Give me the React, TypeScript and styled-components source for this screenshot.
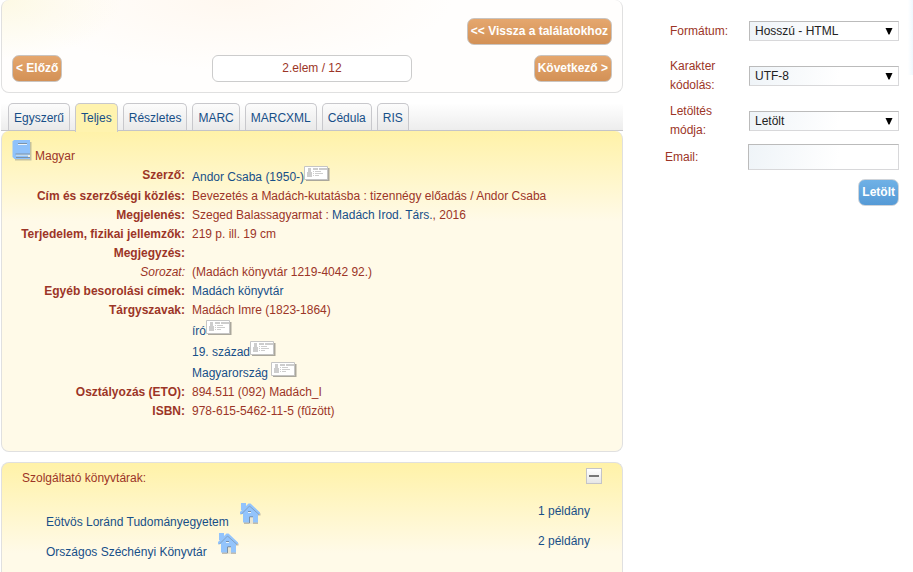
import React from 'react';
import styled, { createGlobalStyle, css } from 'styled-components';

const GlobalStyle = createGlobalStyle`
  * { box-sizing: border-box; }
  body {
    margin: 0;
    background: #fff;
    color: #9c3527;
    font: 12px/19px "Liberation Sans", Arial, sans-serif;
  }
  button, input, select { font: inherit; margin: 0; }
`;

const link = '#174f88';

const Page = styled.div`
  display: grid;
  grid-template-columns: minmax(0, 1fr) 290px;
  align-items: start;
  min-height: 100vh;
  background: linear-gradient(to right, transparent, #eef8fe) top right / 5px 75px no-repeat, #fff;
`;

const Main = styled.main`
  padding-left: 1px;
`;

const Header = styled.section`
  display: flex;
  flex-direction: column;
  gap: 10px;
  padding: 18px 10px 10px;
  border: 1px solid #e0e0e0;
  border-top: 0;
  border-radius: 8px;
  background:
    radial-gradient(ellipse 120px 60px at 0 0, #fdf9e4, transparent),
    radial-gradient(ellipse 220px 70px at 230px 0, #fff8f0, transparent),
    #fffefd;
`;

const BackRow = styled.div`
  display: flex;
  justify-content: flex-end;
`;

const Pager = styled.nav`
  display: grid;
  grid-template-columns: 1fr 200px 1fr;
  > :last-child { justify-self: end; }
  > :first-child { justify-self: start; }
`;

const Button = styled.button<{ $tone: 'orange' | 'blue' }>`
  height: 27px;
  padding: 0 3px;
  border: 1px solid ${p => (p.$tone === 'orange' ? '#c9c4c0' : '#cfd4da')};
  border-radius: 7px;
  background: ${p => (p.$tone === 'orange'
    ? 'linear-gradient(#e5a76e, #d39156)'
    : 'linear-gradient(#6fb1e6, #559ad6)')};
  color: #fff;
  font-weight: bold;
  white-space: nowrap;
  cursor: pointer;
`;

const Position = styled.div`
  height: 27px;
  border: 1px solid #ccc;
  border-radius: 6px;
  background: #fff;
  line-height: 25px;
  text-align: center;
`;

const Tabs = styled.div`
  display: flex;
  gap: 5px;
  margin-top: 10px;
  padding-left: 7px;
  border-bottom: 1px solid #c4c4c8;
  background: linear-gradient(#fff, #ededed);
`;

const Tab = styled.button<{ $active?: boolean }>`
  height: 27px;
  padding: 2px 5px 0;
  border: 1px solid #c8c8cc;
  border-bottom: 0;
  border-radius: 5px 5px 0 0;
  background: linear-gradient(#fcfcfc, #e9e9e9);
  color: ${link};
  cursor: pointer;
  ${p => p.$active && css`
    height: 29px;
    margin-bottom: -2px;
    padding-bottom: 2px;
    background: #fff3ae;
    z-index: 1;
  `}
`;

const Panel = styled.section`
  border: 1px solid #e0e0e0;
  border-radius: 8px;
  background: linear-gradient(#fff2a8, #fffae8 90px);
`;

const Record = styled(Panel)`
  padding: 9px 0 30px;
  border-top: 0;
`;

const Kind = styled.div`
  display: flex;
  align-items: flex-end;
  gap: 3px;
  height: 26px;
  padding-left: 10px;
  > svg { margin-bottom: 5px; }
`;

const Fields = styled.table`
  width: 100%;
  border-collapse: collapse;
  th, td { padding: 0; vertical-align: top; }
  td { padding-left: 7px; }
`;

const Label = styled.th<{ $minor?: boolean }>`
  width: 183px;
  text-align: right;
  font-weight: ${p => (p.$minor ? 'normal' : 'bold')};
  font-style: ${p => (p.$minor ? 'italic' : 'normal')};
`;

const Link = styled.a`
  color: ${link};
  text-decoration: none;
`;

const Authority = styled.div`
  display: flex;
  align-items: flex-start;
  height: 21px;
  > :first-child { padding-top: 2px; white-space: pre; }
`;

const Libraries = styled(Panel)`
  margin-top: 10px;
  padding: 5px 20px 10px;
  border-bottom: 0;
  border-radius: 8px 8px 0 0;
`;

const PanelHead = styled.div`
  display: flex;
  justify-content: space-between;
  height: 34px;
  > span { padding-top: 1px; }
`;

const Toggle = styled.button`
  display: grid;
  place-items: center;
  width: 16px;
  height: 16px;
  padding: 0;
  border: 1px solid #c4c4c8;
  background: linear-gradient(#fff, #e6e6e6);
`;

const LibraryList = styled.ul`
  margin: 0;
  padding: 0 12px 0 24px;
  list-style: none;
`;

const Library = styled.li`
  display: flex;
  justify-content: space-between;
  height: 30px;
`;

const LibraryName = styled.span`
  display: flex;
  align-items: flex-start;
  gap: 10px;
  > :first-child { padding-top: 11px; }
`;

const Export = styled.form`
  display: grid;
  grid-template-columns: 78px 151px;
  grid-template-rows: 40px 50px 40px 32px 33px;
  column-gap: 5px;
  padding: 11px 14px 0 42px;
  align-items: center;
  > :last-child { grid-column: 2; justify-self: end; align-self: end; }
`;

const FormLabel = styled.label<{ $flush?: boolean }>`
  padding-left: ${p => (p.$flush ? 0 : 5)}px;
`;

const field = css`
  width: 100%;
  border: 1px solid #d8d8da;
  border-top: 2px solid #bbb;
  border-left: 2px solid #bbb;
  border-radius: 0;
  background: linear-gradient(100deg, #eff4f8, #fff 60%);
  color: #222;
`;

const SelectBox = styled.div`
  display: grid;
  align-items: center;
  padding-left: 1px;
  > * { grid-area: 1 / 1; }
  > svg { justify-self: end; margin-right: 6px; pointer-events: none; }
`;

const Select = styled.select`
  ${field}
  height: 20px;
  padding: 0 16px 1px 5px;
  border-width: 1px;
  appearance: none;
`;

const Input = styled.input`
  ${field}
  height: 26px;
  border-width: 1px;
`;

const BookIcon = () => (
  <svg width="20" height="21" viewBox="0 0 20 21" aria-hidden="true">
    <path d="M3 2h16.500v18.500H3z" fill="#8b8f88" opacity=".5" />
    <path d="M2 0h16v19H2.500L.5 17V1.500z" fill="#8fc2fb" />
    <path d="M4 14.500h14v3H4z" fill="#eef1ea" />
    <path d="M4 15.500h12v1.500H4z" fill="#8fc2fb" />
    <path d="M3.500 14h14.500M4 17.500h14" stroke="#7d93a8" fill="none" />
    <path d="M6 3.500h9" stroke="#7d93a8" />
    <path d="M6 4.500h9" stroke="#eaf3fb" />
  </svg>
);

const CardIcon = () => (
  <svg width="26" height="16" viewBox="0 0 26 16" aria-hidden="true">
    <path d="M2 2h23.500v13H2z" fill="#aaa79c" />
    <path d="M.5.5h23v13H.5z" fill="#fff" stroke="#c5c5c5" />
    <path d="M4 2h3v4h1v5H3V6h1zM9 2h5v2H9zM15 2h8v2h-8zM9 5h1v1H9zM11 5h6v1h-6zM9 7h1v1H9zM11 7h8v1h-8zM9 9h1v1H9zM11 9h4v1h-4z" fill="#cdcdcd" />
  </svg>
);

const HomeIcon = () => (
  <svg width="23" height="24" viewBox="0 0 23 24" aria-hidden="true">
    <path d="M5 12 12 4l9.500 7.500v2H19V22H5z" fill="#8f8c86" opacity=".55" />
    <path d="M2 1h5v3l2.500-2.500h2L21 10.500V12h-2v8.500h-5V15h-3.500v5.500H4V12H1v-2l2-2H2z" fill="#93c4fc" />
    <path d="M2 12.500 10.500 4 20 12.500" fill="none" stroke="#7f9dbd" strokeWidth=".9" />
    <path d="M10.500 15H14v7h-3.500z" fill="#e9e5d2" />
    <path d="M9 9.500h3M10.500 15v6M10.500 14.800H14" stroke="#7088a3" strokeWidth=".9" fill="none" />
    <path d="M9 10.500h3" stroke="#eaf3fb" />
  </svg>
);

const Arrow = () => (
  <svg width="8" height="7" viewBox="0 0 8 7" aria-hidden="true">
    <path d="M.5 0h7L4.500 6.500h-1z" fill="#000" />
  </svg>
);

const tabs = ['Egyszerű', 'Teljes', 'Részletes', 'MARC', 'MARCXML', 'Cédula', 'RIS'];

const WithCard = ({ children }: { children: string }) => (
  <Authority>
    <Link href="#">{children}</Link>
    <CardIcon />
  </Authority>
);

const fields: { label: string; minor?: boolean; value: React.ReactNode }[] = [
  { label: 'Szerző:', value: <WithCard>Andor Csaba (1950-)</WithCard> },
  { label: 'Cím és szerzőségi közlés:', value: 'Bevezetés a Madách-kutatásba : tizennégy előadás / Andor Csaba' },
  { label: 'Megjelenés:', value: <>Szeged Balassagyarmat : <Link href="#">Madách Irod. Társ.</Link>, 2016</> },
  { label: 'Terjedelem, fizikai jellemzők:', value: '219 p. ill. 19 cm' },
  { label: 'Megjegyzés:', value: '' },
  { label: 'Sorozat:', minor: true, value: '(Madách könyvtár 1219-4042 92.)' },
  { label: 'Egyéb besorolási címek:', value: <Link href="#">Madách könyvtár</Link> },
  {
    label: 'Tárgyszavak:',
    value: (
      <>
        Madách Imre (1823-1864)
        <WithCard>író</WithCard>
        <WithCard>19. század</WithCard>
        <WithCard>{'Magyarország '}</WithCard>
      </>
    ),
  },
  { label: 'Osztályozás (ETO):', value: '894.511 (092) Madách_I' },
  { label: 'ISBN:', value: '978-615-5462-11-5 (fűzött)' },
];

const libraries = [
  { name: 'Eötvös Loránd Tudományegyetem', copies: '1 példány' },
  { name: 'Országos Széchényi Könyvtár', copies: '2 példány' },
];

const selects = [
  { id: 'format', label: 'Formátum:', value: 'Hosszú - HTML' },
  { id: 'charset', label: 'Karakter kódolás:', value: 'UTF-8' },
  { id: 'method', label: 'Letöltés módja:', value: 'Letölt' },
];

export default function App() {
  return (
    <>
      <GlobalStyle />
      <Page>
        <Main>
          <Header>
            <BackRow>
              <Button type="button" $tone="orange">&lt;&lt; Vissza a találatokhoz</Button>
            </BackRow>
            <Pager>
              <Button type="button" $tone="orange">&lt; Előző</Button>
              <Position>2.elem / 12</Position>
              <Button type="button" $tone="orange">Következő &gt;</Button>
            </Pager>
          </Header>

          <Tabs role="tablist">
            {tabs.map(name => (
              <Tab key={name} type="button" role="tab" aria-selected={name === 'Teljes'} $active={name === 'Teljes'}>
                {name}
              </Tab>
            ))}
          </Tabs>

          <Record>
            <Kind><BookIcon /><span>Magyar</span></Kind>
            <Fields>
              <tbody>
                {fields.map(f => (
                  <tr key={f.label}>
                    <Label scope="row" $minor={f.minor}>{f.label}</Label>
                    <td>{f.value}</td>
                  </tr>
                ))}
              </tbody>
            </Fields>
          </Record>

          <Libraries>
            <PanelHead>
              <span>Szolgáltató könyvtárak:</span>
              <Toggle type="button" aria-label="Összecsukás">
                <svg width="10" height="2" aria-hidden="true"><path d="M0 0h10v2H0z" fill="#777" /></svg>
              </Toggle>
            </PanelHead>
            <LibraryList>
              {libraries.map(l => (
                <Library key={l.name}>
                  <LibraryName><Link href="#">{l.name}</Link><HomeIcon /></LibraryName>
                  <Link href="#">{l.copies}</Link>
                </Library>
              ))}
            </LibraryList>
          </Libraries>
        </Main>

        <Export>
          {selects.map(s => (
            <React.Fragment key={s.id}>
              <FormLabel htmlFor={s.id}>{s.label}</FormLabel>
              <SelectBox>
                <Select id={s.id}><option>{s.value}</option></Select>
                <Arrow />
              </SelectBox>
            </React.Fragment>
          ))}
          <FormLabel htmlFor="email" $flush>Email:</FormLabel>
          <Input id="email" type="email" />
          <Button type="button" $tone="blue">Letölt</Button>
        </Export>
      </Page>
    </>
  );
}
